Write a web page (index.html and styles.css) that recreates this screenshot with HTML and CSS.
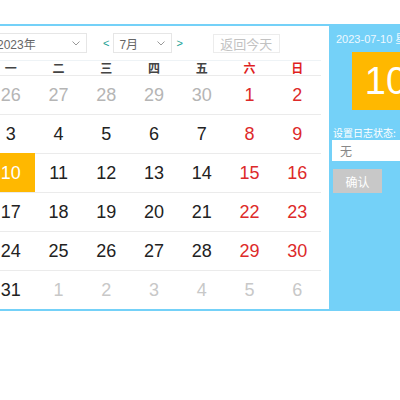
FILE: index.html
```html
<!DOCTYPE html>
<html>
<head>
<meta charset="utf-8">
<link rel="stylesheet" href="styles.css">
</head>
<body>
<div class="cal">
  <div class="main">
    <div class="bar">
      <div class="sel year"><span>2023年</span><svg class="chev" width="8" height="5" viewBox="0 0 8 5"><polyline points="0.5,0.5 4,4 7.5,0.5" fill="none" stroke="#999" stroke-width="1"/></svg></div>
      <span class="arrow prev">&lt;</span>
      <div class="sel month"><span>7月</span><svg class="chev" width="8" height="5" viewBox="0 0 8 5"><polyline points="0.5,0.5 4,4 7.5,0.5" fill="none" stroke="#999" stroke-width="1"/></svg></div>
      <span class="arrow next">&gt;</span>
      <button class="today">返回今天</button>
    </div>
    <div class="grid">
      <div class="wk">一</div><div class="wk">二</div><div class="wk">三</div><div class="wk">四</div><div class="wk">五</div><div class="wk red">六</div><div class="wk red">日</div>
      <div class="d other">26</div><div class="d other">27</div><div class="d other">28</div><div class="d other">29</div><div class="d other">30</div><div class="d red">1</div><div class="d red">2</div>
      <div class="d">3</div><div class="d">4</div><div class="d">5</div><div class="d">6</div><div class="d">7</div><div class="d red">8</div><div class="d red">9</div>
      <div class="d on">10</div><div class="d">11</div><div class="d">12</div><div class="d">13</div><div class="d">14</div><div class="d red">15</div><div class="d red">16</div>
      <div class="d">17</div><div class="d">18</div><div class="d">19</div><div class="d">20</div><div class="d">21</div><div class="d red">22</div><div class="d red">23</div>
      <div class="d">24</div><div class="d">25</div><div class="d">26</div><div class="d">27</div><div class="d">28</div><div class="d red">29</div><div class="d red">30</div>
      <div class="d">31</div><div class="d next">1</div><div class="d next">2</div><div class="d next">3</div><div class="d next">4</div><div class="d next">5</div><div class="d next">6</div>
    </div>
  </div>
  <div class="side">
    <div class="date">2023-07-10 星期一</div>
    <div class="big">10</div>
    <div class="label">设置日志状态:</div>
    <div class="input">无</div>
    <button class="ok">确认</button>
  </div>
</div>
</body>
</html>
```
FILE: styles.css
```css
html, body {
  margin: 0;
  padding: 0;
  overflow: hidden;
  background: #fff;
}
body {
  font-family: "Liberation Sans", "Noto Sans CJK SC", sans-serif;
}
.cal {
  display: flex;
  width: max-content;
  margin: 24px 0 0 -23px;
  border: 2px solid #74d1f8;
}
.main {
  background: #fff;
  width: 334px;
  padding: 7px 8px 0 8px;
}
.bar {
  display: flex;
  align-items: center;
  height: 20px;
}
.sel {
  box-sizing: border-box;
  height: 20px;
  border: 1px solid #e6e6e6;
  display: flex;
  align-items: center;
  justify-content: space-between;
  padding: 0 6px 0 9px;
  font-size: 12px;
  color: #666;
  background: #fff;
}
.year { width: 100px; }
.month { width: 59px; padding-left: 5px; margin-left: 4px; }
.chev { display: block; }
.arrow {
  font-size: 11px;
  color: #1aa094;
  margin-left: 16px;
}
.arrow.next { margin-left: 4px; }
.today {
  box-sizing: border-box;
  margin-left: 30px;
  width: 67px;
  height: 19px;
  padding: 0;
  border: 1px solid #ececec;
  background: #fff;
  color: #c2c2c2;
  font-family: "Noto Sans CJK SC", sans-serif;
  font-size: 13px;
  line-height: 17px;
}
.grid {
  display: grid;
  grid-template-columns: repeat(7, 1fr);
  margin-top: 7px;
}
.wk {
  box-sizing: border-box;
  height: 15px;
  border-top: 1px solid #eef3f6;
  text-align: center;
  font-family: "Noto Sans CJK SC", sans-serif;
  font-size: 12px;
  font-weight: bold;
  line-height: 14px;
  color: #444;
}
.d {
  box-sizing: border-box;
  height: 39px;
  border-top: 1px solid #ebebeb;
  text-align: center;
  font-size: 18px;
  line-height: 38px;
  color: #222;
}
.red { color: #dd2a2a; }
.wk.red { color: #e01f1f; }
.d.other { color: #b5b5b5; }
.d.next { color: #c8c8c8; }
.d.on {
  background: #ffb800;
  color: #fff;
  border-top-color: #ffb800;
}
.side {
  background: #74d1f8;
  width: 110px;
  padding: 6px 0 0 3px;
  color: #fff;
}
.date {
  font-size: 11px;
  line-height: 14px;
  padding-left: 4px;
  white-space: nowrap;
  color: #eef8ff;
}
.big {
  margin: 6px 0 0 20px;
  width: 68px;
  height: 58px;
  background: #ffb800;
  color: #fff;
  font-size: 38px;
  line-height: 58px;
  text-align: center;
}
.label {
  margin: 16px 0 0 1px;
  font-family: "Noto Sans CJK SC", sans-serif;
  font-size: 10px;
  line-height: 14px;
  white-space: nowrap;
}
.input {
  box-sizing: border-box;
  height: 21px;
  background: #fff;
  color: #888;
  font-family: "Noto Sans CJK SC", sans-serif;
  font-size: 12px;
  line-height: 21px;
  padding-left: 8px;
}
.ok {
  display: block;
  margin: 8px 0 0 1px;
  width: 49px;
  height: 24px;
  padding: 0;
  border: none;
  background: #c8c8c8;
  color: #fff;
  font-family: "Noto Sans CJK SC", sans-serif;
  font-size: 12px;
}
```
